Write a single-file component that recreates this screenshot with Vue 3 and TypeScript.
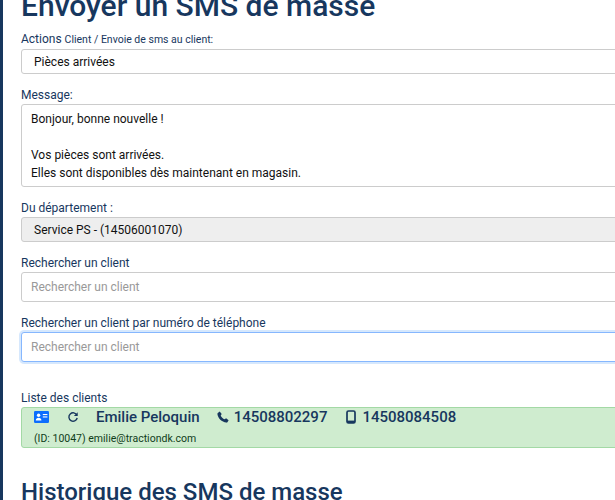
<script setup lang="ts">
const placeholder = 'Rechercher un client'
</script>

<template>
  <div class="page">
    <div class="content">
      <h1 class="title">Envoyer un SMS de masse</h1>

      <label class="label first">Actions <small>Client / Envoie de sms au client:</small></label>
      <div class="control select">Pièces arrivées</div>

      <label class="label gap">Message:</label>
      <div class="control textarea">
        <div>Bonjour, bonne nouvelle !</div>
        <div>&nbsp;</div>
        <div>Vos pièces sont arrivées.</div>
        <div>Elles sont disponibles dès maintenant en magasin.</div>
      </div>

      <label class="label gap">Du département :</label>
      <div class="control select disabled">Service PS - (14506001070)</div>

      <label class="label gap">Rechercher un client</label>
      <input class="control input" :placeholder="placeholder" />

      <label class="label gap">Rechercher un client par numéro de téléphone</label>
      <input class="control input focused" :placeholder="placeholder" />

      <label class="label list-label">Liste des clients</label>
      <div class="client">
        <div class="client-top">
          <svg class="card-icon" width="15" height="12" viewBox="0 0 15 12">
            <rect width="15" height="12" rx="1.2" fill="#0d6efd" />
            <circle cx="4.6" cy="4.3" r="1.7" fill="#fff" />
            <path d="M1.8 9.4c0-1.700 1.200-2.600 2.800-2.600s2.800.9 2.800 2.600z" fill="#fff" />
            <rect x="8.8" y="3" width="4.6" height="1.1" fill="#fff" />
            <rect x="8.8" y="5.4" width="4.6" height="1.1" fill="#fff" />
          </svg>
          <svg class="refresh-icon" width="12" height="12" viewBox="0 0 12 12" fill="none">
            <path d="M9.9 4.2A4.2 4.2 0 1 0 10.2 7" stroke="#17375e" stroke-width="1.4" />
            <path d="M10.7 1.2v3.9H6.9z" fill="#17375e" />
          </svg>
          <span class="name">Emilie Peloquin</span>
          <svg class="phone-icon" width="12" height="12" viewBox="0 0 12 12">
            <path d="M2.7.4 4.7 2.9 3.7 4.4c.7 1.600 2.200 3.200 3.900 3.900l1.500-1 2.500 2-1.200 2c-.3.3-.6.4-1 .3C4.700 11.100.9 7.300.4 3.100c0-.4.1-.7.4-1z" fill="#17375e" />
          </svg>
          <span class="num">14508802297</span>
          <svg class="mobile-icon" width="10" height="14" viewBox="0 0 10 14" fill="none">
            <rect x="1" y="1" width="8" height="12" rx="1.500" stroke="#17375e" stroke-width="1.700" />
            <rect x="1" y="10.600" width="8" height="2.400" fill="#17375e" />
          </svg>
          <span class="num">14508084508</span>
        </div>
        <div class="client-sub">(ID: 10047) emilie@tractiondk.com</div>
      </div>

      <h2 class="title second">Historique des SMS de masse</h2>
    </div>
  </div>
</template>

<style>
html, body { margin: 0; overflow: hidden; width: 615px; height: 500px; background: #fff; }
</style>

<style scoped>
.page {
  width: 615px;
  height: 500px;
  overflow: hidden;
  box-sizing: border-box;
  border-left: 3px solid #17375e;
  font-family: Roboto, "Liberation Sans", sans-serif;
  color: #17375e;
}
.content {
  width: 800px;
  margin-top: -12px;
  padding-left: 18px;
  padding-top: 0.1px;
}
.title {
  margin: 0;
  font-size: 30px;
  line-height: 36px;
  font-weight: 500;
  color: #17375e;
}
.label {
  display: block;
  font-size: 12px;
  line-height: 14px;
}
.label small { font-size: 10.5px; }
.first { margin-top: 8px; }
.gap { margin-top: 14px; }
.list-label { margin-top: 29px; }
.control {
  display: block;
  box-sizing: border-box;
  width: 100%;
  margin-top: 2px;
  border: 1px solid #ccc;
  border-radius: 3px;
  background: #fff;
  font-family: inherit;
  font-size: 12px;
  color: #111;
}
.select {
  height: 25px;
  line-height: 24px;
  padding-left: 12px;
}
.disabled { background: #eee; }
.textarea {
  height: 83px;
  padding: 5px 9px;
  line-height: 18px;
}
.input {
  height: 30px;
  padding: 0 9px;
  outline: none;
}
.input::placeholder { color: #999; opacity: 1; }
.focused {
  border-color: #86b7fe;
  box-shadow: 0 0 0 2px rgba(120, 180, 250, 0.3);
}
.client {
  box-sizing: border-box;
  height: 41px;
  margin-top: 2px;
  padding-left: 12px;
  background: #cfeccf;
  border: 1px solid #a3d9a5;
  border-radius: 3px;
}
.client-top {
  display: flex;
  align-items: center;
  height: 18px;
  font-size: 15px;
  font-weight: 500;
}
.card-icon { margin-right: 18px; }
.refresh-icon { margin-right: 17px; }
.name { margin-right: 17px; }
.phone-icon { margin-right: 5px; }
.mobile-icon { margin-left: 19px; margin-right: 6px; }
.client-sub {
  margin-top: 6px;
  font-size: 10.5px;
  line-height: 14px;
  color: #0f3d1a;
}
.second {
  margin-top: 29px;
  font-size: 24px;
  line-height: 30px;
}
</style>
